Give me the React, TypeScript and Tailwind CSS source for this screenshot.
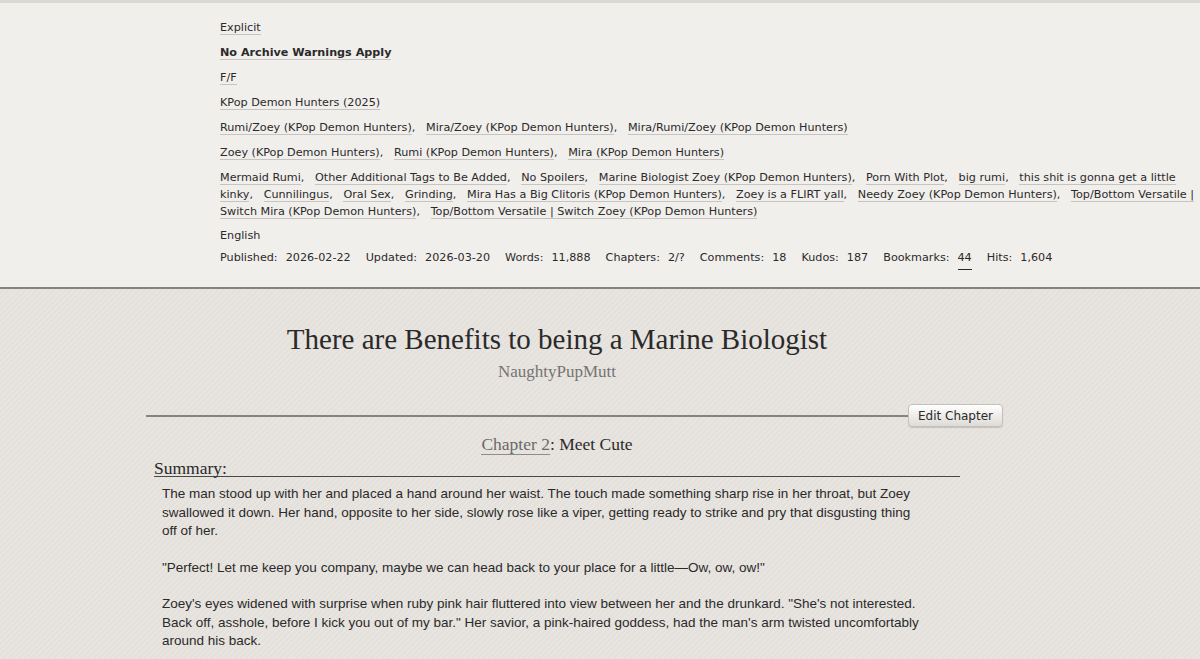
import React from "react";

const meta = "font-['DejaVu_Sans',_sans-serif] text-[11.2px] text-[#2a2a2a]";

function Tag({ children, last }: { children: React.ReactNode; last?: boolean }) {
  return (
    <>
      <span className="border-b border-[#c7c4c0]">{children}</span>
      {!last && <span>,&nbsp;&nbsp; </span>}
    </>
  );
}

function TagRow({ tags, className = "mb-2" }: { tags: string[]; className?: string }) {
  return (
    <div className={`leading-[17px] ${className}`}>
      {tags.map((t, i) => (
        <Tag key={t} last={i === tags.length - 1}>{t}</Tag>
      ))}
    </div>
  );
}

const stats: [string, string][] = [
  ["Published:", "2026-02-22"],
  ["Updated:", "2026-03-20"],
  ["Words:", "11,888"],
  ["Chapters:", "2/?"],
  ["Comments:", "18"],
  ["Kudos:", "187"],
  ["Bookmarks:", "44"],
  ["Hits:", "1,604"],
];

function MetaSection() {
  return (
    <div className="bg-[#f1efec] border-t-[3px] border-[#dcd9d5] border-b-2 border-b-[#858380]">
      <div className={`${meta} pl-[220px] pt-[16px] pb-[17px]`}>
        <TagRow tags={["Explicit"]} />
        <div className="leading-[17px] mb-2 font-bold">
          <span className="border-b border-[#c7c4c0]">No Archive Warnings Apply</span>
        </div>
        <TagRow tags={["F/F"]} />
        <TagRow tags={["KPop Demon Hunters (2025)"]} />
        <TagRow
          tags={[
            "Rumi/Zoey (KPop Demon Hunters)",
            "Mira/Zoey (KPop Demon Hunters)",
            "Mira/Rumi/Zoey (KPop Demon Hunters)",
          ]}
        />
        <TagRow
          tags={["Zoey (KPop Demon Hunters)", "Rumi (KPop Demon Hunters)", "Mira (KPop Demon Hunters)"]}
        />
        <TagRow
          className="mb-[7px]"
          tags={[
            "Mermaid Rumi",
            "Other Additional Tags to Be Added",
            "No Spoilers",
            "Marine Biologist Zoey (KPop Demon Hunters)",
            "Porn With Plot",
            "big rumi",
            "this shit is gonna get a little kinky",
            "Cunnilingus",
            "Oral Sex",
            "Grinding",
            "Mira Has a Big Clitoris (KPop Demon Hunters)",
            "Zoey is a FLIRT yall",
            "Needy Zoey (KPop Demon Hunters)",
            "Top/Bottom Versatile | Switch Mira (KPop Demon Hunters)",
            "Top/Bottom Versatile | Switch Zoey (KPop Demon Hunters)",
          ]}
        />
        <div className="leading-[17px] mb-[5px]">English</div>
        <div className="leading-[17px] flex gap-x-[15px]">
          {stats.map(([k, v]) => (
            <div key={k} className="flex gap-[8px]">
              <span>{k}</span>
              {k === "Bookmarks:" ? (
                <span className="border-b border-[#2a2a2a] pb-[3px]">{v}</span>
              ) : (
                <span>{v}</span>
              )}
            </div>
          ))}
        </div>
      </div>
    </div>
  );
}

// line breaks follow the published page
const paragraphs = [
  [
    "The man stood up with her and placed a hand around her waist. The touch made something sharp rise in her throat, but Zoey",
    "swallowed it down. Her hand, opposite to her side, slowly rose like a viper, getting ready to strike and pry that disgusting thing",
    "off of her.",
  ],
  ["\"Perfect! Let me keep you company, maybe we can head back to your place for a little\u2014Ow, ow, ow!\""],
  [
    "Zoey's eyes widened with surprise when ruby pink hair fluttered into view between her and the drunkard. \"She's not interested.",
    "Back off, asshole, before I kick you out of my bar.\" Her savior, a pink-haired goddess, had the man's arm twisted uncomfortably",
    "around his back.",
  ],
];

function WorkSection() {
  return (
    <div className="flex-1 bg-[#e7e3df] bg-[repeating-linear-gradient(135deg,#e8e4e0_0px,#e8e4e0_2px,#e4e0dc_2px,#e4e0dc_4px)]">
      <div className="ml-[146px] w-[822px] pt-[33px]">
        <h2 className="text-center font-['Liberation_Serif',_serif] text-[29px] leading-[34px] text-[#2a2a2a]">
          There are Benefits to being a Marine Biologist
        </h2>
        <div className="mt-[6px] text-center font-['Liberation_Serif',_serif] text-[17px] leading-[20px] text-[#767472]">
          NaughtyPupMutt
        </div>
        <div className="mt-[22px] mr-[-35px] flex items-center">
          <div className="flex-1 h-[2px] bg-[#86837f]" />
          <button
            className={`h-[23px] px-[9px] rounded-[4px] border border-[#c4c1bd] bg-gradient-to-b from-white to-[#dedbd7] shadow-[0_1px_1px_rgba(0,0,0,0.15)] ${meta} text-[12px]`}
          >
            Edit Chapter
          </button>
        </div>
        <div className="mt-[6px] text-center font-['Liberation_Serif',_serif] text-[17.5px] leading-[22px] text-[#2a2a2a]">
          <span className="text-[#6b6967] border-b border-[#8f8c88]">Chapter 2</span>: Meet Cute
        </div>
        <div className="ml-2 w-[806px] mt-[5px]">
          <h3 className="font-['Liberation_Serif',_serif] text-[17.5px] leading-[16px] text-[#2a2a2a] border-b border-[#4a4845]">
            Summary:
          </h3>
        </div>
        <div className="ml-4 w-[820px] mt-[8px] font-['Liberation_Sans',_sans-serif] text-[13.5px] leading-[18.5px] text-[#2a2a2a]">
          {paragraphs.map((lines) => (
            <p key={lines[0].slice(0, 20)} className="mb-[18px] whitespace-nowrap">
              {lines.map((l, i) => (
                <React.Fragment key={i}>
                  {i > 0 && <br />}
                  {l}
                </React.Fragment>
              ))}
            </p>
          ))}
        </div>
      </div>
    </div>
  );
}

export default function App() {
  return (
    <div className="w-[1200px] h-[659px] overflow-hidden flex flex-col">
      <MetaSection />
      <WorkSection />
    </div>
  );
}
